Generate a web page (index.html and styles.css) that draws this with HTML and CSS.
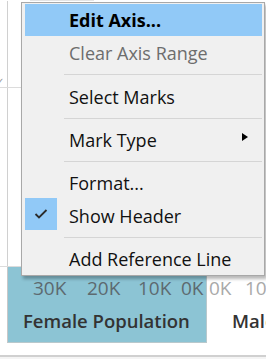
FILE: index.html
```html
<!DOCTYPE html>
<html lang="en">

<head>
    <meta charset="UTF-8">
    <title>Axis Menu</title>
    <link rel="stylesheet" href="styles.css">
</head>

<body>
    <div class="sheet">
        <div class="top-rule"></div>
        <div class="view">
            <div class="pane">
                <div class="pane-top"><span class="tick-mark">✓</span></div>
                <div class="pane-rest"></div>
            </div>
            <div class="headers">
                <div class="header female">
                    <div class="axis">
                        <span class="lbl l30">30K</span>
                        <span class="lbl l20">20K</span>
                        <span class="lbl l10">10K</span>
                        <span class="lbl l0">0K</span>
                    </div>
                    <div class="title">Female Population</div>
                </div>
                <div class="header male">
                    <div class="axis">
                        <span class="lbl m0">0K</span>
                        <span class="lbl">10K</span>
                    </div>
                    <div class="title">Male Population</div>
                </div>
            </div>
        </div>
        <div class="bottom-bar"></div>

        <div class="menu">
            <div class="item active bold">Edit Axis...</div>
            <div class="item disabled">Clear Axis Range</div>
            <div class="sep sep-first"></div>
            <div class="item">Select Marks</div>
            <div class="sep"></div>
            <div class="item">Mark Type <span class="arrow"></span></div>
            <div class="sep"></div>
            <div class="item">Format...</div>
            <div class="item">
                <span class="check">
                    <svg width="14" height="10" viewBox="0 0 14 10">
                        <path d="M1.5 5 L5 8.5 L12.5 1" fill="none" stroke="#2b2b2b" stroke-width="1.8" />
                    </svg>
                </span>
                Show Header
            </div>
            <div class="sep"></div>
            <div class="item">Add Reference Line</div>
        </div>
    </div>
</body>

</html>
```

FILE: styles.css
```css
* {
    box-sizing: border-box;
}

body {
    margin: 0;
    background: #fff;
    font-family: "Open Sans", "Noto Sans", sans-serif;
}

.sheet {
    position: relative;
    width: 266px;
    height: 359px;
    overflow: hidden;
    background: #fff;
}

.top-rule {
    margin-left: 30px;
    width: 64px;
    height: 1px;
    background: #e4e4e4;
}

.view {
    height: 354px;
}

.pane {
    height: 266px;
    display: flex;
    flex-direction: column;
    background: linear-gradient(#d0d0d0, #d0d0d0) 7px 0 / 1px 100% no-repeat;
}

.pane-top {
    height: 87px;
    width: 30px;
    border-bottom: 1px solid #dcdcdc;
    overflow: hidden;
}

.tick-mark {
    display: block;
    margin: 74px 0 0 -4px;
    font-size: 10px;
    line-height: 12px;
    color: #999;
}

.pane-rest {
    flex: 1;
    width: 30px;
    border-bottom: 1px solid #dcdcdc;
}

.headers {
    display: flex;
    height: 76px;
}

.header {
    display: flex;
    flex-direction: column;
}

.female {
    margin-left: 7px;
    width: 200px;
    background: #8cc4d4;
    border-left: 1px solid #c8c8c8;
    border-right: 1px solid #b8c8cc;
    border-bottom: 1px solid #b8c8cc;
}

.male {
    flex: 1;
    overflow: hidden;
}

.axis {
    display: flex;
    height: 42px;
    padding-top: 10px;
    font-size: 19px;
    line-height: 23px;
    white-space: nowrap;
}

.female .axis {
    padding-left: 25px;
    color: #5d6a70;
}

.male .axis {
    padding-left: 2px;
    color: #a9a9a9;
}

.lbl {
    display: block;
    flex-shrink: 0;
}

.l30 {
    width: 54px;
}

.l20 {
    width: 51px;
}

.l10 {
    width: 43px;
}

.m0 {
    width: 36px;
}

.title {
    font-size: 18.5px;
    font-weight: 600;
    color: #333;
    white-space: nowrap;
    line-height: 24px;
}

.female .title {
    padding-left: 15px;
}

.male .title {
    padding-left: 25px;
}

.bottom-bar {
    height: 5px;
    border-top: 2px solid #d0d0d0;
    background: #f4f4f4;
}

/* context menu over the view */
.menu {
    position: absolute;
    left: 21px;
    top: 2px;
    width: 244px;
    padding: 1px 2px 0 3px;
    background: #f0f0f0;
    border: 1px solid #a8a8a8;
    box-shadow: 2px 3px 3px rgba(0, 0, 0, 0.28);
}

.item {
    position: relative;
    height: 33px;
    padding-left: 44px;
    display: flex;
    align-items: center;
    font-size: 18px;
    color: #111;
    white-space: nowrap;
}

.item:first-child {
    height: 32px;
}

.active {
    background: #91c9f7;
}

.bold {
    font-weight: 700;
    color: #000;
}

.disabled {
    color: #6d6d6d;
}

.sep {
    height: 10px;
    margin-left: 39px;
    display: flex;
    align-items: center;
}

.sep::before {
    content: "";
    flex: 1;
    height: 1px;
    background: #d5d5d5;
}

.sep-first {
    height: 11px;
}

.arrow {
    position: absolute;
    right: 14px;
    top: 10px;
    width: 0;
    height: 0;
    border-top: 4.5px solid transparent;
    border-bottom: 4.5px solid transparent;
    border-left: 6px solid #000;
}

.check {
    position: absolute;
    left: 0;
    top: -1px;
    width: 32px;
    height: 32px;
    background: #91c9f7;
    display: flex;
    align-items: center;
    justify-content: center;
}
```
